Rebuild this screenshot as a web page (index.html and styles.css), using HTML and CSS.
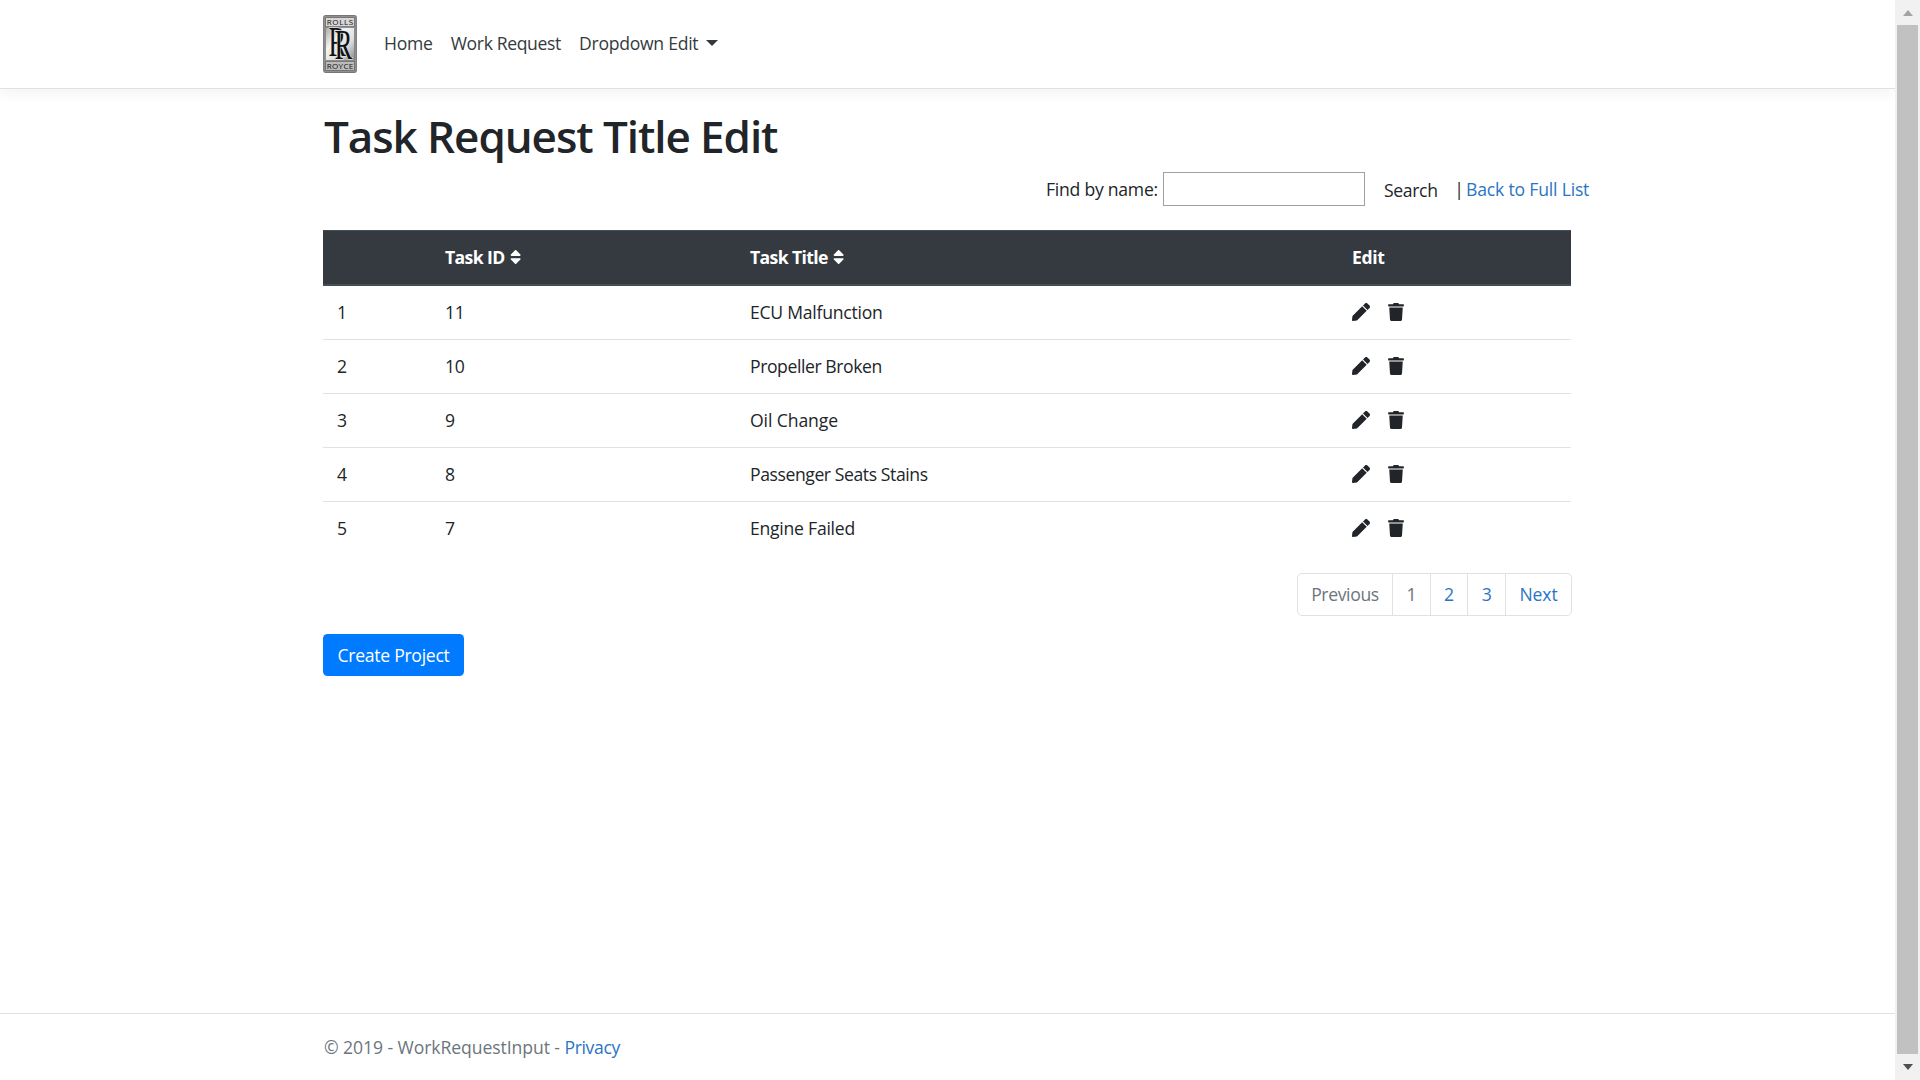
FILE: index.html
```html
<!DOCTYPE html>
<html lang="en">
<head>
<meta charset="utf-8">
<title>Task Request Title Edit - WorkRequestInput</title>
<link rel="stylesheet" href="styles.css">
</head>
<body>
<svg class="sprite" aria-hidden="true">
  <symbol id="pen" viewBox="0 0 512 512"><path d="M290.74 93.24l128.02 128.02-277.99 277.99-114.14 12.6C11.35 513.54-1.56 500.62.14 485.34l12.7-114.22 277.9-277.88zm207.2-19.06l-60.11-60.11c-18.75-18.75-49.16-18.75-67.91 0l-56.55 56.55 128.02 128.02 56.55-56.55c18.75-18.76 18.75-49.16 0-67.91z"/></symbol>
  <symbol id="trash" viewBox="0 0 448 512"><path d="M432 32H312l-9.4-18.7A24 24 0 0 0 281.1 0H166.8a23.72 23.72 0 0 0-21.4 13.3L136 32H16A16 16 0 0 0 0 48v32a16 16 0 0 0 16 16h416a16 16 0 0 0 16-16V48a16 16 0 0 0-16-16zM53.2 467a48 48 0 0 0 47.9 45h245.8a48 48 0 0 0 47.9-45L416 128H32z"/></symbol>
  <symbol id="sort" viewBox="0 0 320 512"><path d="M41 288h238c21.4 0 32.1 25.9 17 41L177 448c-9.4 9.4-24.6 9.4-33.9 0L24 329c-15.1-15.1-4.4-41 17-41zm255-105L177 64c-9.4-9.4-24.6-9.4-33.9 0L24 183c-15.1 15.1-4.4 41 17 41h238c21.4 0 32.1-25.9 17-41z"/></symbol>
</svg>
<div class="page">
  <header class="navbar">
    <div class="container nav-inner">
      <svg class="logo" viewBox="0 0 34 58" role="img" aria-label="Rolls Royce">
        <defs><linearGradient id="metal" x1="0" y1="0" x2="1" y2="1"><stop offset="0" stop-color="#aaa"/><stop offset=".35" stop-color="#f4f4f4"/><stop offset=".65" stop-color="#dedede"/><stop offset="1" stop-color="#8a8a8a"/></linearGradient></defs>
        <rect x=".7" y=".7" width="32.6" height="56.6" rx="2" fill="#999" stroke="#777" stroke-width="1.2"/>
        <rect x="2.7" y="2.7" width="28.6" height="9" fill="#d6d6d6" stroke="#555" stroke-width=".6"/>
        <rect x="2.7" y="12.7" width="28.6" height="32.6" fill="url(#metal)" stroke="#777" stroke-width=".6"/>
        <rect x="2.7" y="46.3" width="28.6" height="9" fill="#bbb" stroke="#555" stroke-width=".6"/>
        <text class="logo-word" x="3.8" y="10" textLength="26.4">ROLLS</text>
        <text class="logo-word" x="3.8" y="53.6" textLength="26.4">ROYCE</text>
        <text class="logo-r" x="5.5" y="41" textLength="17.5" lengthAdjust="spacingAndGlyphs">R</text>
        <text class="logo-r" x="11.5" y="43.6" textLength="18" lengthAdjust="spacingAndGlyphs">R</text>
      </svg>
      <nav class="links">
        <a class="home">Home</a>
        <a class="work">Work Request</a>
        <a class="drop">Dropdown Edit</a><span class="caret"></span>
      </nav>
    </div>
  </header>
  <main class="container">
    <h1>Task Request Title Edit</h1>
    <form class="search">
      <label for="q">Find by name:</label>
      <input id="q" type="text">
      <button type="button">Search</button>
      <span class="bar">|</span>
      <a class="link back">Back to Full List</a>
    </form>
    <table>
      <colgroup><col class="c1"><col class="c2"><col class="c3"><col class="c4"></colgroup>
      <thead><tr><th></th><th>Task ID<svg class="sort"><use href="#sort"/></svg></th><th>Task Title<svg class="sort"><use href="#sort"/></svg></th><th class="edit">Edit</th></tr></thead>
      <tbody>
        <tr><td>1</td><td>11</td><td>ECU Malfunction</td><td><div class="actions"><svg class="pen"><use href="#pen"/></svg><svg class="trash"><use href="#trash"/></svg></div></td></tr>
        <tr><td>2</td><td>10</td><td class="tight">Propeller Broken</td><td><div class="actions"><svg class="pen"><use href="#pen"/></svg><svg class="trash"><use href="#trash"/></svg></div></td></tr>
        <tr><td>3</td><td>9</td><td class="loose">Oil Change</td><td><div class="actions"><svg class="pen"><use href="#pen"/></svg><svg class="trash"><use href="#trash"/></svg></div></td></tr>
        <tr><td>4</td><td>8</td><td class="tight">Passenger Seats Stains</td><td><div class="actions"><svg class="pen"><use href="#pen"/></svg><svg class="trash"><use href="#trash"/></svg></div></td></tr>
        <tr><td>5</td><td>7</td><td>Engine Failed</td><td><div class="actions"><svg class="pen"><use href="#pen"/></svg><svg class="trash"><use href="#trash"/></svg></div></td></tr>
      </tbody>
    </table>
    <ul class="pagination">
      <li class="wide muted">Previous</li><li class="muted">1</li><li>2</li><li>3</li><li class="next">Next</li>
    </ul>
    <button class="create" type="button">Create Project</button>
  </main>
  <footer><div class="container"><span class="copy">© 2019 - WorkRequestInput - </span><a class="link privacy">Privacy</a></div></footer>
</div>
<div class="scrollbar"><i class="up"></i><i class="thumb"></i><i class="down"></i></div>
</body>
</html>
```
FILE: styles.css
```css
* { box-sizing: border-box; }
body { margin: 0; height: 1080px; display: flex; overflow: hidden; background: #fff; color: #212529; font: 17.6px/27px "Open Sans", "Noto Sans", sans-serif; letter-spacing: -.25px; }
.sprite { position: absolute; width: 0; height: 0; }
.page { width: 1895px; height: 1080px; display: flex; flex-direction: column; }
.container { width: 1249px; margin: 0 auto; }
.navbar { height: 89px; flex: none; border-bottom: 1px solid #dee2e6; box-shadow: 0 4.5px 13.5px rgba(0, 0, 0, .05); }
.nav-inner { height: 88px; display: flex; align-items: center; }
.logo { width: 34px; height: 58px; letter-spacing: 0; }
.logo-word { font: 400 8px "Open Sans", sans-serif; fill: #111; }
.logo-r { font: 400 42px "Liberation Serif", serif; fill: #111; stroke: #e4e4e4; stroke-width: 1.4px; paint-order: stroke; }
.links { display: flex; align-items: center; margin-left: 27px; padding-bottom: 2px; color: #343a40; }
.links a { margin-right: 18px; }
.work { letter-spacing: -.37px; }
.links .drop { margin-right: 8px; letter-spacing: -.27px; }
.caret { border: 6px solid transparent; border-top-color: #343a40; border-bottom: 0; }
main { flex: 1; }
h1 { margin: 20px 0 0 1px; height: 54px; font-size: 44px; line-height: 54px; font-weight: 600; letter-spacing: -1.07px; }
.search { display: flex; align-items: center; height: 34px; margin: 9px 0 24px 723px; white-space: nowrap; }
.search label { flex: 0 0 117px; }
.search input { flex: 0 0 202px; height: 34px; border: 1px solid #a0a0a0; }
.search button { flex: 0 0 54px; margin: 2px 0 0 19px; padding: 0; border: 0; background: none; color: inherit; font: inherit; letter-spacing: -.35px; text-align: left; }
.bar { flex: 0 0 10px; margin-left: 16px; text-align: center; }
.back { margin-left: 2px; letter-spacing: -.19px; }
.link { color: #2a74c4; }
table { width: 1248px; table-layout: fixed; border-collapse: separate; border-spacing: 0; }
.c1 { width: 108px; }
.c2 { width: 305px; }
.c3 { width: 602px; }
th { height: 56px; padding: 0 14px; text-align: left; background: #343a40; color: #fff; font-weight: 700; letter-spacing: -.62px; border-top: 1px solid #454d55; border-bottom: 2px solid #454d55; }
th.edit { letter-spacing: -.4px; }
td { height: 54px; padding: 0 14px; border-top: 1px solid #dee2e6; }
tbody tr:first-child td { height: 53px; border-top: 0; }
.tight { letter-spacing: -.42px; }
.loose { letter-spacing: -.1px; }
table svg { fill: currentColor; }
.sort { width: 11.25px; height: 18px; margin-left: 5px; vertical-align: -2px; }
.actions { display: flex; gap: 18px; padding-bottom: 1px; }
.pen { width: 18px; height: 18px; }
.trash { width: 16px; height: 18px; }
.pagination { list-style: none; display: flex; width: 275px; height: 43px; margin: 18px 0 18px 974px; padding: 0; border: 1px solid #dee2e6; border-radius: 5px; color: #2a74c4; line-height: 41px; text-align: center; }
.pagination li { flex: 1; border-left: 1px solid #dee2e6; }
.pagination .wide { flex: 0 0 94px; border: 0; letter-spacing: -.37px; }
.pagination .next { flex: 0 0 66px; letter-spacing: -.1px; }
.pagination .muted { color: #6c757d; }
.create { display: block; width: 141px; height: 42px; padding: 0; border: 0; border-radius: 4.5px; background: #007bff; color: #fff; font: inherit; letter-spacing: -.28px; }
footer { height: 67px; border-top: 1px solid #dee2e6; color: #6c757d; line-height: 67px; }
.copy { margin-left: 1px; white-space: pre; letter-spacing: -.08px; }
.privacy { letter-spacing: -.35px; }
.scrollbar { width: 25px; height: 1080px; background: #f1f1f1; display: flex; flex-direction: column; align-items: center; }
.up { margin-top: 10px; border: 5.5px solid transparent; border-bottom: 6px solid #a3a3a3; border-top: 0; }
.thumb { margin-top: 9px; width: 21px; height: 1029px; background: #c1c1c1; }
.down { margin-top: 10px; border: 5.5px solid transparent; border-top: 6px solid #505050; border-bottom: 0; }
```
